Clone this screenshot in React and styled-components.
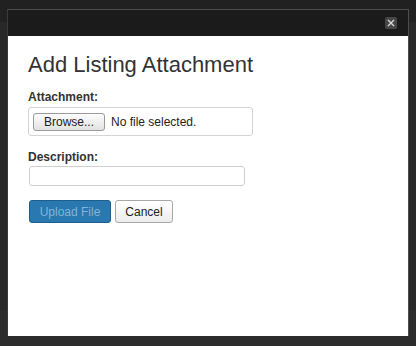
import React from "react";
import styled, { createGlobalStyle } from "styled-components";

const GlobalStyle = createGlobalStyle`
  html, body {
    margin: 0;
    padding: 0;
    height: 100%;
    background: #262626;
    font-family: "Liberation Sans", Arial, sans-serif;
  }
  #root {
    height: 100%;
  }
`;

const Page = styled.div`
  height: 346px;
  box-sizing: border-box;
  padding: 9px 0 0 7px;
  background:
    linear-gradient(to bottom, #212121 0px, #212121 22px, #282828 22px, #282828 310px, #2c2c2c 310px);
`;

const Modal = styled.div`
  width: 402px;
  box-sizing: border-box;
  border: 1px solid #4d4d4d;
  border-left-color: #3a3a3a;
  border-bottom: none;
  display: flex;
  flex-direction: column;
`;

const Header = styled.div`
  height: 26px;
  background: #1b1b1b;
  display: flex;
  align-items: center;
  justify-content: flex-end;
  padding-right: 11px;
`;

const CloseButton = styled.button`
  width: 12px;
  height: 12px;
  padding: 0;
  border: none;
  border-radius: 2px;
  background: #474747;
  display: flex;
  align-items: center;
  justify-content: center;
  cursor: pointer;
`;

const Body = styled.div`
  height: 300px;
  background: #ffffff;
  padding: 16px 20px 0 20px;
  box-sizing: border-box;
`;

const Title = styled.h1`
  margin: 0 0 12px 0;
  font-size: 22px;
  line-height: 25px;
  font-weight: normal;
  color: #333;
`;

const Label = styled.label`
  display: block;
  font-size: 12px;
  line-height: 16px;
  font-weight: bold;
  color: #333;
  margin-bottom: ${({ $gap }) => $gap || 2}px;
`;

const FileBox = styled.div`
  width: 225px;
  height: 29px;
  box-sizing: border-box;
  border: 1px solid #d4d4d4;
  border-radius: 3px;
  display: flex;
  align-items: center;
  gap: 6px;
  padding-left: 4px;
  margin-bottom: 13px;
`;

const BrowseButton = styled.button`
  height: 18px;
  width: 72px;
  padding: 0;
  box-sizing: border-box;
  border: 1px solid #9a9a9a;
  border-radius: 3px;
  background: linear-gradient(to bottom, #fdfdfd, #e2e2e2);
  font-family: "Liberation Sans", Arial, sans-serif;
  font-size: 12px;
  color: #222;
`;

const FileText = styled.span`
  font-size: 12px;
  color: #222;
`;

const TextInput = styled.input`
  display: block;
  width: 216px;
  height: 20px;
  box-sizing: border-box;
  border: 1px solid #cfcfcf;
  border-radius: 3px;
  margin: 0 0 14px 1px;
  outline: none;
`;

const Actions = styled.div`
  display: flex;
  gap: 4px;
  margin-left: 1px;
`;

const Button = styled.button`
  height: 23px;
  padding: 0;
  box-sizing: border-box;
  border-radius: 3px;
  font-family: "Liberation Sans", Arial, sans-serif;
  font-size: 12px;
  width: ${({ $w }) => $w}px;
  border: 1px solid ${({ $primary }) => ($primary ? "#1d5e8c" : "#a8a8a8")};
  background: ${({ $primary }) =>
    $primary ? "#2978b0" : "linear-gradient(to bottom, #ffffff, #ececec)"};
  color: ${({ $primary }) => ($primary ? "#86b3d6" : "#222")};
`;

export default function App() {
  return (
    <>
      <GlobalStyle />
      <Page>
        <Modal>
          <Header>
            <CloseButton aria-label="Close">
              <svg width="8" height="8" viewBox="0 0 8 8">
                <path d="M1 1L7 7M7 1L1 7" stroke="#d8d8d8" strokeWidth="1.4" />
              </svg>
            </CloseButton>
          </Header>
          <Body>
            <Title>Add Listing Attachment</Title>
            <Label>Attachment:</Label>
            <FileBox>
              <BrowseButton>Browse...</BrowseButton>
              <FileText>No file selected.</FileText>
            </FileBox>
            <Label $gap={1}>Description:</Label>
            <TextInput type="text" />
            <Actions>
              <Button $primary $w={82}>Upload File</Button>
              <Button $w={58}>Cancel</Button>
            </Actions>
          </Body>
        </Modal>
      </Page>
    </>
  );
}
